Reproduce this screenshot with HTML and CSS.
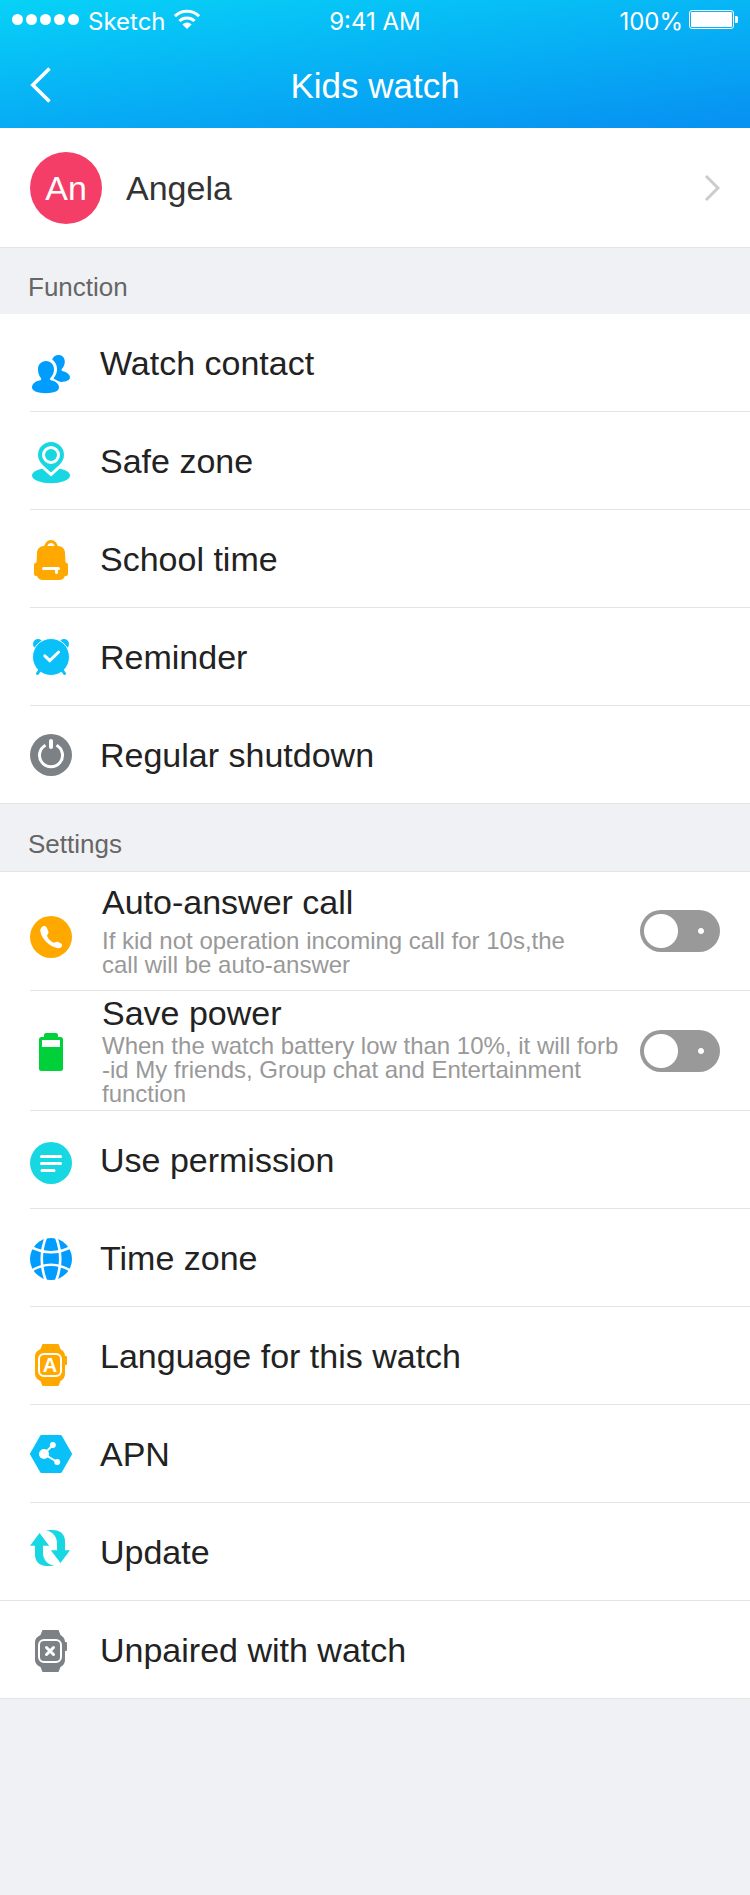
FILE: index.html
```html
<!DOCTYPE html>
<html lang="en">
<head>
<meta charset="utf-8">
<meta name="viewport" content="width=device-width, initial-scale=1">
<title>Kids watch</title>
<link rel="stylesheet" href="styles.css">
</head>
<body>
<header class="header">
  <div class="status">
    <div class="status-side">
      <svg class="signal" viewBox="0 0 68 22" aria-hidden="true"><g fill="#fff"><circle cx="5.5" cy="8.500" r="5.5"/><circle cx="19.5" cy="8.500" r="5.5"/><circle cx="33.5" cy="8.500" r="5.5"/><circle cx="47.5" cy="8.500" r="5.5"/><circle cx="61.5" cy="8.500" r="5.5"/></g></svg>
      <span>Sketch</span>
      <svg class="wifi" viewBox="0 0 26 26" aria-hidden="true"><g fill="none" stroke="#fff" stroke-width="3"><path d="M1 7.2a17.2 17.2 0 0 1 24 0"/><path d="M5.4 12a11 11 0 0 1 15.2 0"/></g><path d="M8.4 15.4a6.6 6.6 0 0 1 9.2 0L13 20z" fill="#fff"/></svg>
    </div>
    <time>9:41 AM</time>
    <div class="status-side status-side--end">
      <span>100%</span>
      <svg class="battery" viewBox="0 0 49 26" aria-hidden="true"><rect x=".5" y="1.5" width="44" height="18" rx="2.5" fill="none" stroke="#fff"/><rect x="2" y="3" width="41" height="15" rx="1" fill="#fff"/><path d="M46 7h1.5a1.5 1.5 0 0 1 1.5 1.500v4a1.500 1.500 0 0 1-1.500 1.500H46z" fill="#fff"/></svg>
    </div>
  </div>
  <nav class="nav">
    <button class="back" type="button" aria-label="Back"><svg viewBox="0 0 22 38" aria-hidden="true"><path d="M19.500 1.500 2.800 18l16.700 16.500" fill="none" stroke="#fff" stroke-width="3.600"/></svg></button>
    <h1 class="title">Kids watch</h1>
  </nav>
</header>

<main>
  <a class="profile" href="#profile">
    <span class="avatar">An</span>
    <span class="profile-name">Angela</span>
    <svg class="chevron" viewBox="0 0 16 28" aria-hidden="true"><path d="M2 2l12 12L2 26" fill="none" stroke="#ccc" stroke-width="3"/></svg>
  </a>

  <h2 class="section-title">Function</h2>
  <ul class="list">
    <li class="item"><a class="row" href="#contact">
      <svg class="icon" viewBox="0 0 42 66" aria-hidden="true"><g transform="translate(0 22)" fill="#009dff"><path d="M16 9c4.800 0 8 3.600 8 8.500 0 3.600-1.600 6.500-3.600 8.500-.6.7-.4 2 .6 2.300 5 1 8 3.700 8 7.200 0 3.600-5.500 5.700-13.300 5.700S2 39 2 35.500c0-3.500 3-6.200 8.300-7.200 1-.3 1.200-1.600.6-2.300C9 24 8 20.500 8 17.300 8 12.600 11.200 9 16 9z"/><path d="M22.200 7.500C23 4.800 25.500 3 28.400 3c3.700 0 6.400 2.700 6.400 6.600 0 3.200-1.300 5.700-3 7.400-.5.7-.3 1.700.5 2 4.500 1 7.700 3.600 7.700 6.300 0 2.800-3.600 4.600-9 4.600-2-.3-4-1.500-6.800-3l-.7-.6C26 23.500 27.300 20 27 16.300 26.700 12.500 25 9.500 22.200 7.500z"/></g></svg>
      <span class="label">Watch contact</span></a></li>
    <li class="item"><a class="row" href="#safe-zone">
      <svg class="icon" viewBox="0 0 42 66" aria-hidden="true"><g transform="translate(0 13)" fill="#17d7e3"><ellipse cx="21" cy="34.500" rx="19" ry="7.700"/><path d="M21 1a13 13 0 0 1 13 13c0 7-6 11-13 17.500C14 25 8 21 8 14A13 13 0 0 1 21 1z" stroke="#fff" stroke-width="6"/><path d="M21 1a13 13 0 0 1 13 13c0 7-6 11-13 17.500C14 25 8 21 8 14A13 13 0 0 1 21 1z"/><circle cx="21" cy="14" r="7.500" stroke="#fff" stroke-width="3"/></g></svg>
      <span class="label">Safe zone</span></a></li>
    <li class="item"><a class="row" href="#school-time">
      <svg class="icon" viewBox="0 0 42 66" aria-hidden="true"><g transform="translate(0 13)"><path d="M15.500 9a5.500 6.500 0 0 1 11 0" fill="none" stroke="#ffa900" stroke-width="3"/><path d="M14 7h14c4 0 7 3 7 7l.5 9.500c1.500 0 2.500 1 2.500 2.500v9c0 1.500-1 2-3 2-1 2.500-3 4-6 4H13c-3 0-5-1.500-6-4-2 0-3-.5-3-2v-9c0-1.500 1-2.500 2.500-2.500L7 14c0-4 3-7 7-7z" fill="#ffa900"/><path d="M13.500 29.500h15M26.500 30v3.500" fill="none" stroke="#fff" stroke-width="3" stroke-linecap="round"/></g></svg>
      <span class="label">School time</span></a></li>
    <li class="item"><a class="row" href="#reminder">
      <svg class="icon" viewBox="0 0 42 66" aria-hidden="true"><g transform="translate(0 14)"><circle cx="8" cy="6" r="5" fill="#09c1f8"/><circle cx="34" cy="6" r="5" fill="#09c1f8"/><circle cx="21" cy="19" r="18.500" fill="#09c1f8" stroke="#fff"/><path d="M10.500 31l-3 4.500M31.500 31l3 4.500" stroke="#09c1f8" stroke-width="3" stroke-linecap="round"/><path d="M14.800 17.800l5 4.800 8.900-8.600" fill="none" stroke="#fff" stroke-width="3" stroke-linecap="round"/></g></svg>
      <span class="label">Reminder</span></a></li>
    <li class="item item--full"><a class="row" href="#shutdown">
      <svg class="icon" viewBox="0 0 42 66" aria-hidden="true"><g transform="translate(0 12)"><circle cx="21" cy="21" r="21" fill="#7b8185"/><path d="M15.500 11.200a11.500 11.500 0 1 0 11 0" fill="none" stroke="#fff" stroke-width="3"/><path d="M21 7v6" stroke="#fff" stroke-width="4" stroke-linecap="round"/></g></svg>
      <span class="label">Regular shutdown</span></a></li>
  </ul>

  <h2 class="section-title section-title--ruled">Settings</h2>
  <ul class="list">
    <li class="item"><label class="row row--switch">
      <svg class="icon" viewBox="0 0 42 66" aria-hidden="true"><g transform="translate(0 18)"><circle cx="21" cy="21" r="21" fill="#ffa900"/><path d="M13 10.300c1.500-.9 3-.3 3.800 1.500l1.600 3.800c.5 1.300-.3 2.200-.9 3-.6.8-.4 1.800.2 2.800 1.300 2 3 3.600 5 4.800 1 .6 1.800.5 2.500.1.900-.6 1.800-.8 3-.3l2.900 1.400c1.400.9 1.300 2.300.3 3.600-1.400 1.400-3.600 1.500-6 .6-7.300-2.600-13.600-9-15-15.800-.5-2.400.6-4.500 2.600-5.500z" fill="#fff"/></g></svg>
      <span class="texts"><span class="label">Auto-answer call</span>
      <span class="note">If kid not operation incoming call for 10s,the<br>call will be auto-answer</span></span>
      <input class="switch" type="checkbox" role="switch"></label></li>
    <li class="item"><label class="row row--switch">
      <svg class="icon" viewBox="0 0 42 66" aria-hidden="true"><g transform="translate(0 13)" fill="#00d13a"><rect x="14" y="2" width="14" height="8" rx="2"/><rect x="9" y="6" width="24" height="34" rx="2.500"/><path d="M12 9h18v7H12z" fill="#fff"/></g></svg>
      <span class="texts texts--dense"><span class="label">Save power</span>
      <span class="note">When the watch battery low than 10%, it will forb<br>-id My friends, Group chat and Entertainment<br>function</span></span>
      <input class="switch" type="checkbox" role="switch"></label></li>
    <li class="item"><a class="row" href="#permission">
      <svg class="icon" viewBox="0 0 42 66" aria-hidden="true"><g transform="translate(0 15)"><circle cx="21" cy="21" r="21" fill="#17d7e3"/><path d="M11.500 14.500h19M11.500 21.500h19M12 28.500h12" stroke="#fff" stroke-width="3" stroke-linecap="round"/></g></svg>
      <span class="label">Use permission</span></a></li>
    <li class="item"><a class="row" href="#time-zone">
      <svg class="icon" viewBox="0 0 42 66" aria-hidden="true"><g transform="translate(0 13)"><circle cx="21" cy="21" r="21" fill="#009dff"/><path d="M16-1Q7.500 21 16 43M26-1Q34.500 21 26 43M0 8.500Q21 20 42 8.500M0 33.500Q21 20 42 33.500" fill="none" stroke="#fff" stroke-width="2.600"/></g></svg>
      <span class="label">Time zone</span></a></li>
    <li class="item"><a class="row" href="#language">
      <svg class="icon" viewBox="0 0 42 66" aria-hidden="true"><g transform="translate(0 21)"><path d="M12.500 0h16l2 5q4.500 2.500 4.500 7h1q1 0 1 1v7q0 1-1 1h-1v9q0 4.500-4.500 7l-2 5h-16l-2-5Q5 34.500 5 30V12q0-4.500 5.500-7z" fill="#ffa900"/><rect x="9" y="10" width="22" height="22" rx="5" fill="none" stroke="#fff" stroke-width="2"/><text class="watch-letter" x="20" y="28" text-anchor="middle">A</text></g></svg>
      <span class="label">Language for this watch</span></a></li>
    <li class="item"><a class="row" href="#apn">
      <svg class="icon" viewBox="0 0 42 66" aria-hidden="true"><g transform="translate(0 14)"><path d="M11.500 1.500h19L40.500 19l-10 17.500h-19L1.500 19z" fill="#09c1f8" stroke="#09c1f8" stroke-width="3" stroke-linejoin="round"/><path d="M22.800 10L14 19l13.200 8" fill="none" stroke="#fff" stroke-width="2"/><g fill="#fff"><circle cx="14" cy="19" r="5"/><circle cx="22.800" cy="10" r="3"/><circle cx="27.200" cy="27" r="3"/></g></g></svg>
      <span class="label">APN</span></a></li>
    <li class="item item--full"><a class="row" href="#update">
      <svg class="icon" viewBox="0 0 42 66" aria-hidden="true"><g transform="translate(0 11)" fill="#17d7e3"><path d="M9.500 3l9.700 12.700H13V23c0 6 4 11.500 11 12.500-2 .7-8 .8-11 0-5-1.400-8-5.500-8-10.500v-9.300H0z"/><path d="M30.500 33l-9.700-12.700H27V13c0-6-4-11.500-11-12.500 2-.7 8-.8 11 0 5 1.400 8 5.500 8 10.500v9.300h5z"/></g></svg>
      <span class="label">Update</span></a></li>
    <li class="item item--full"><a class="row" href="#unpair">
      <svg class="icon" viewBox="0 0 42 66" aria-hidden="true"><g transform="translate(0 13)"><path d="M12.500 0h16l2 5q4.500 2.500 4.500 7h1q1 0 1 1v7q0 1-1 1h-1v9q0 4.500-4.500 7l-2 5h-16l-2-5Q5 34.500 5 30V12q0-4.500 5.500-7z" fill="#7b8185"/><rect x="9" y="10" width="22" height="22" rx="5" fill="none" stroke="#fff" stroke-width="2"/><path d="M16.500 17.500l7 7M23.500 17.500l-7 7" stroke="#fff" stroke-width="3" stroke-linecap="round"/></g></svg>
      <span class="label">Unpaired with watch</span></a></li>
  </ul>
</main>
</body>
</html>
```
FILE: styles.css
```css
* {
  box-sizing: border-box;
}

body {
  margin: 0;
  min-height: 100vh;
  background: #f0f1f5;
  color: #222;
  font-family: "Liberation Sans", Arial, sans-serif;
}

a {
  color: inherit;
  text-decoration: none;
}

.header {
  background: linear-gradient(173deg, #07d2f7, #0793f2 95%);
  color: #fff;
}

.status {
  display: grid;
  grid-template-columns: 1fr auto 1fr;
  align-items: center;
  height: 43px;
  padding: 0 12px;
  font-family: Inter, sans-serif;
  font-size: 24px;
}

.status-side {
  display: flex;
  align-items: center;
  gap: 8px;
}

.status-side--end {
  gap: 6px;
  justify-content: flex-end;
}

.signal {
  width: 68px;
  height: 22px;
}

.wifi {
  width: 26px;
  height: 26px;
}

.battery {
  width: 49px;
  height: 26px;
}

.nav {
  display: grid;
  grid-template-columns: 72px 1fr 72px;
  align-items: center;
  height: 85px;
}

.back {
  display: flex;
  height: 60px;
  padding: 0 0 0 30px;
  align-items: center;
  border: 0;
  background: none;
}

.back svg {
  width: 22px;
  height: 38px;
}

.title {
  margin: 0;
  font-size: 35px;
  font-weight: 400;
  line-height: 40px;
  text-align: center;
}

.profile {
  display: flex;
  align-items: center;
  gap: 24px;
  padding: 24px 30px 23px;
  border-bottom: 1px solid #e3e4e6;
  background: #fff;
  color: #333;
  font-size: 34px;
}

.avatar {
  display: flex;
  align-items: center;
  justify-content: center;
  width: 72px;
  height: 72px;
  border-radius: 50%;
  background: #f53e67;
  color: #fff;
}

.profile-name {
  flex: 1;
}

.chevron {
  width: 16px;
  height: 28px;
}

.section-title {
  margin: 0;
  padding: 24px 28px 12px;
  color: #666;
  font-size: 26px;
  font-weight: 400;
  line-height: 30px;
}

.section-title--ruled {
  padding-top: 25px;
  border-bottom: 1px solid #e3e4e6;
}

.list {
  margin: 0;
  padding: 0;
  list-style: none;
  background: #fff;
}

.item {
  position: relative;
  border-bottom: 1px solid #e3e4e6;
}

/* Covers the start of the divider so that it lines up with the icons. */
.item:not(.item--full)::after {
  content: "";
  position: absolute;
  bottom: -1px;
  left: 0;
  width: 30px;
  height: 1px;
  background: #fff;
}

.row {
  display: flex;
  align-items: center;
  gap: 28px;
  min-height: 97px;
  padding: 0 30px;
}

.row--switch {
  gap: 30px;
}

.icon {
  flex: none;
  width: 42px;
  height: 66px;
}

.label {
  font-size: 34px;
  line-height: 40px;
}

.texts {
  display: flex;
  flex: 1;
  flex-direction: column;
  gap: 7px;
  padding: 10px 0 13px;
}

.texts--dense {
  gap: 1px;
  padding: 2px 0 4px;
}

.note {
  color: #999;
  font-size: 24px;
  line-height: 24px;
  white-space: nowrap;
}

.watch-letter {
  fill: #fff;
  font-size: 20px;
  font-weight: 700;
}

.switch {
  flex: none;
  width: 80px;
  height: 42px;
  margin: 0 0 0 -30px;
  appearance: none;
  border-radius: 21px;
  background:
    radial-gradient(circle at 21px 21px, #fff 16.5px, transparent 17.5px),
    radial-gradient(circle at 61px 21px, #fff 2.5px, transparent 3.5px),
    #999;
}

.switch:checked {
  background:
    radial-gradient(circle at 59px 21px, #fff 16.5px, transparent 17.5px),
    radial-gradient(circle at 19px 21px, #fff 2.5px, transparent 3.5px),
    #00d13a;
}
```
